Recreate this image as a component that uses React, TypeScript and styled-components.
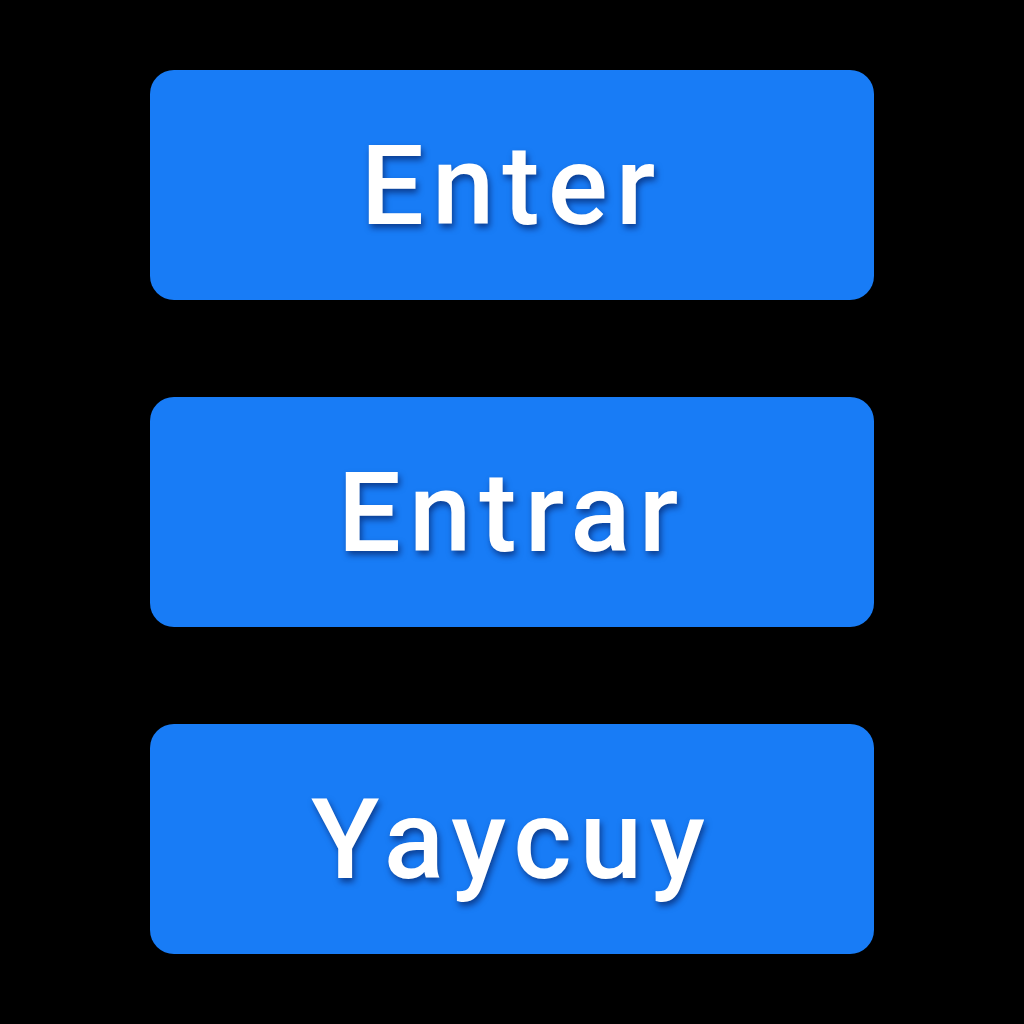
import React from "react";
import styled, { createGlobalStyle } from "styled-components";

const Global = createGlobalStyle`
  html, body {
    margin: 0;
    padding: 0;
    background: #000000;
  }
  body {
    font-family: Roboto, "Noto Sans", sans-serif;
  }
`;

const Page = styled.main`
  width: 1024px;
  height: 1024px;
  box-sizing: border-box;
  padding-top: 70px;
  display: flex;
  flex-direction: column;
  align-items: center;
  gap: 97px;
  background: #000000;
`;

const Button = styled.button`
  width: 724px;
  height: 230px;
  border: none;
  border-radius: 24px;
  background: #187cf6;
  color: #ffffff;
  font-family: Roboto, "Noto Sans", sans-serif;
  font-size: 112px;
  font-weight: 500;
  letter-spacing: 8px;
  display: flex;
  align-items: center;
  justify-content: center;
  padding: 0;
  text-shadow: 2px 4px 6px rgba(0, 10, 60, 0.55);
  cursor: pointer;
`;

const labels = ["Enter", "Entrar", "Yaycuy"];

export default function App() {
  return (
    <>
      <Global />
      <Page>
        {labels.map((l) => (
          <Button key={l}>{l}</Button>
        ))}
      </Page>
    </>
  );
}
